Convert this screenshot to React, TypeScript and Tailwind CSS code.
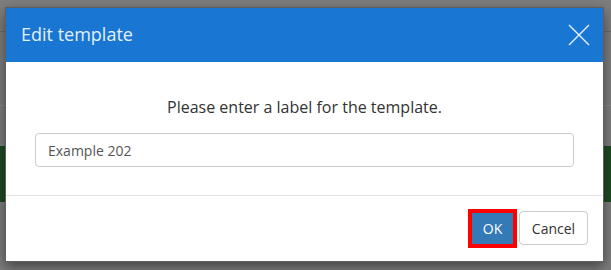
import React from "react";

const font = { fontFamily: '"Open Sans", "Noto Sans", sans-serif' };

function CloseIcon() {
    return (
        <svg width="22" height="22" viewBox="0 0 22 22" fill="none" stroke="currentColor" strokeWidth={1.4}>
            <path d="M1 1 L21 21 M21 1 L1 21" />
        </svg>
    );
}

export default function App() {
    const [label, setLabel] = React.useState<string>("Example 202");

    return (
        <div className="relative w-[611px] h-[270px] overflow-hidden bg-[#7d7d7d]" style={font}>
            {/* page behind the overlay */}
            <div className="flex flex-col">
                <div className="h-[32px] border-b border-[#6a6a6a]" />
                <div className="h-[74px] border-b border-[#8a8a8a]" />
                <div className="h-[40px]" />
                <div className="h-[56px] bg-[#1f4a22]" />
            </div>

            {/* dialog */}
            <div className="absolute left-[5px] top-[7px] w-[599px] h-[255px] flex flex-col bg-white border border-[#5f5f5f] shadow-[0_5px_12px_rgba(0,0,0,0.45)]">
                <div className="h-[54px] flex items-center justify-between bg-[#1976d2] pl-[15px] pr-[13px]">
                    <h4 className="text-[18px] text-[#e3f0fb] pb-[1px]">Edit template</h4>
                    <button className="text-[#eaf3fc]">
                        <CloseIcon />
                    </button>
                </div>
                <div className="h-[134px] flex flex-col items-center pt-[34px] px-[29px] border-b border-[#e5e5e5]">
                    <p className="text-[16px] leading-[22px] text-[#333]">Please enter a label for the template.</p>
                    <input
                        value={label}
                        onChange={(e) => setLabel(e.target.value)}
                        className="mt-[15px] w-full h-[34px] px-[12px] text-[14px] text-[#555] border border-[#ccc] rounded-[4px] outline-none"
                        style={font}
                    />
                </div>
                <div className="flex-1 flex items-center justify-end gap-[2px] pr-[15px] pb-[1px]">
                    <div className="border-4 border-[#ff0000]">
                        <button className="w-[41px] h-[31px] bg-[#337ab7] text-white text-[14px]">OK</button>
                    </div>
                    <button className="w-[69px] h-[34px] border border-[#ccc] rounded-[4px] text-[14px] text-[#333] bg-white">Cancel</button>
                </div>
            </div>
        </div>
    );
}
